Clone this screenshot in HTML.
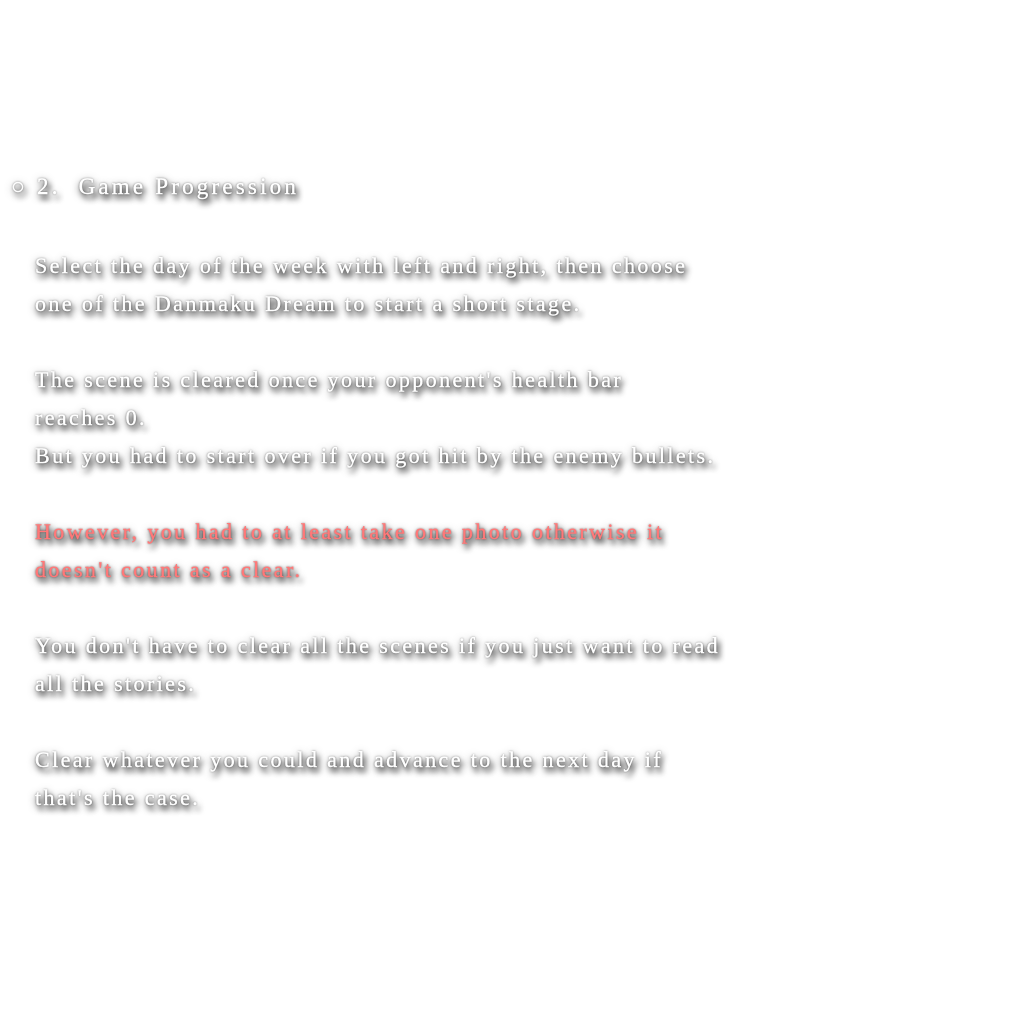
<!DOCTYPE html>
<html><head><style>
body{margin:0;width:1024px;height:1024px;background:#fff;overflow:hidden;font-family:"Liberation Serif","DejaVu Serif",serif;}
.t{position:absolute;left:35px;color:#fff;font-size:22px;letter-spacing:2.4px;line-height:38px;white-space:pre;-webkit-text-stroke:0.4px #fff;text-shadow:3px 5px 6px rgba(0,0,0,.9),0 2px 8px rgba(0,0,0,.7),0 0 2px rgba(0,0,0,.6);}
.r{color:#ff7878;-webkit-text-stroke:0.4px #ff7878;}
</style></head><body>
<div class="t" style="left:11px;top:168px;font-size:23px;letter-spacing:3.2px;">○ 2.  Game Progression</div>
<div class="t" style="top:247px;">Select the day of the week with left and right, then choose
one of the Danmaku Dream to start a short stage.

The scene is cleared once your opponent's health bar
reaches 0.
But you had to start over if you got hit by the enemy bullets.

<span class="r">However, you had to at least take one photo otherwise it
doesn't count as a clear.</span>

You don't have to clear all the scenes if you just want to read
all the stories.

Clear whatever you could and advance to the next day if
that's the case.</div>
</body></html>
